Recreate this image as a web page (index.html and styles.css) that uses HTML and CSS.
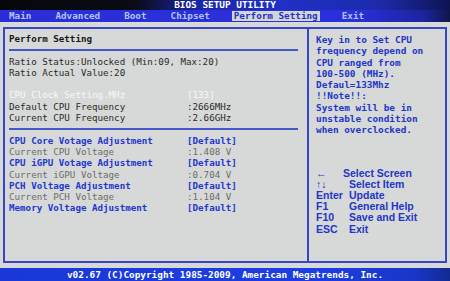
FILE: index.html
```html
<!DOCTYPE html>
<html>
<head>
<meta charset="utf-8">
<link rel="stylesheet" href="styles.css">
</head>
<body>
<div class="screen">
  <div class="title">BIOS SETUP UTILITY</div>
  <nav class="menu">
    <span class="tab">Main</span>
    <span class="tab">Advanced</span>
    <span class="tab">Boot</span>
    <span class="tab">Chipset</span>
    <span class="tab active">Perform Setting</span>
    <span class="tab">Exit</span>
  </nav>
  <div class="body">
    <div class="frame">
      <section class="left">
        <div class="row head">Perform Setting</div>
        <div class="rule"></div>
        <div class="row">Ratio Status:Unlocked (Min:09, Max:20)</div>
        <div class="row">Ratio Actual Value:20</div>
        <div class="row"></div>
        <div class="row sel"><span class="lbl">CPU Clock Setting.MHz</span><span>[133]</span></div>
        <div class="row"><span class="lbl">Default CPU Frequency</span><span>:2666MHz</span></div>
        <div class="row"><span class="lbl">Current CPU Frequency</span><span>:2.66GHz</span></div>
        <div class="rule"></div>
        <div class="row blue"><span class="lbl">CPU Core Votage Adjustment</span><span>[Default]</span></div>
        <div class="row gray"><span class="lbl">Current CPU Voltage</span><span>:1.408 V</span></div>
        <div class="row blue"><span class="lbl">CPU iGPU Votage Adjustment</span><span>[Default]</span></div>
        <div class="row gray"><span class="lbl">Current iGPU Voltage</span><span>:0.704 V</span></div>
        <div class="row blue"><span class="lbl">PCH Voltage Adjustment</span><span>[Default]</span></div>
        <div class="row gray"><span class="lbl">Current PCH Voltage</span><span>:1.104 V</span></div>
        <div class="row blue"><span class="lbl">Memory Voltage Adjustment</span><span>[Default]</span></div>
      </section>
      <aside class="right">
        <div class="help">
          <div>Key in to Set CPU</div>
          <div>frequency depend on</div>
          <div>CPU ranged from</div>
          <div>100-500 (MHz).</div>
          <div>Defaul=133Mhz</div>
          <div>!!Note!!:</div>
          <div>System will be in</div>
          <div>unstable condition</div>
          <div>when overclocked.</div>
        </div>
        <div class="keys">
          <span class="k">&#8592;</span><span class="d shift">Select Screen</span>
          <span class="k">&#8593;&#8595;</span><span class="d">Select Item</span>
          <span class="k">Enter</span><span class="d">Update</span>
          <span class="k">F1</span><span class="d">General Help</span>
          <span class="k">F10</span><span class="d">Save and Exit</span>
          <span class="k">ESC</span><span class="d">Exit</span>
        </div>
      </aside>
    </div>
  </div>
  <div class="footer">v02.67 (C)Copyright 1985-2009, American Megatrends, Inc.</div>
</div>
</body>
</html>
```

FILE: styles.css
```css
html, body {
  margin: 0;
  padding: 0;
  width: 450px;
  height: 281px;
  overflow: hidden;
  background: #d6d9d7;
}

.screen {
  width: 450px;
  height: 281px;
  display: flex;
  flex-direction: column;
  font-family: "DejaVu Sans Mono", "Liberation Mono", monospace;
}

.title {
  height: 10px;
  flex: none;
  line-height: 10px;
  text-align: center;
  color: #ffffff;
  font-size: 9.4px;
  font-weight: bold;
  background: linear-gradient(90deg, #07070b 0%, #0b0b16 30%, #1a26a8 44%, #2030c8 62%, #1c2aa8 85%, #0e1450 100%);
}

.menu {
  height: 12px;
  flex: none;
  display: flex;
  align-items: center;
  gap: 20px;
  padding-left: 7px;
  background: linear-gradient(90deg, #2a2ed6 0%, #2a30dc 78%, #1c24a0 94%, #10164a 100%);
}

.tab {
  padding: 0 2px;
  height: 10px;
  line-height: 10px;
  font-size: 9.3px;
  font-weight: bold;
  color: #b2c4f4;
}

.tab.active {
  background: #d2d6d5;
  color: #2232c8;
}

.body {
  flex: 1;
  min-height: 0;
  padding: 5px 3px 5px 3px;
  display: flex;
}

.frame {
  flex: 1;
  display: flex;
  border: 2px solid #3646c6;
}

.left {
  width: 298px;
  padding: 4px 0 0 4px;
  font-size: 9.2px;
  color: #2a2a2a;
}

.row {
  height: 11.3px;
  line-height: 11.3px;
  display: flex;
  white-space: pre;
}

.lbl {
  width: 178px;
  flex: none;
}

.head {
  font-weight: bold;
  color: #161616;
}

.sel {
  color: #f8f8f8;
}

.blue {
  color: #2236d0;
  font-weight: bold;
}

.gray {
  color: #6c6c6c;
}

.rule {
  height: 11.3px;
  display: flex;
  align-items: center;
  width: 289px;
}

.rule::before {
  content: "";
  display: block;
  width: 100%;
  height: 2px;
  background: #4656c8;
}

.right {
  flex: 1;
  border-left: 2px solid #3646c6;
  padding: 5px 0 0 7px;
  color: #2236c8;
}

.help {
  font-size: 9.4px;
  font-weight: bold;
  line-height: 11.3px;
}

.help div {
  height: 11.3px;
  white-space: nowrap;
}

.keys {
  margin-top: 32px;
  display: grid;
  grid-template-columns: 33px auto;
  grid-auto-rows: 11.2px;
  align-items: center;
  font-family: "Liberation Sans", Arial, sans-serif;
  font-size: 10.5px;
  font-weight: bold;
  line-height: 11.2px;
}

.shift {
  margin-left: -6px;
}

.footer {
  height: 13px;
  flex: none;
  line-height: 13px;
  text-align: center;
  color: #ffffff;
  font-size: 9.4px;
  font-weight: bold;
  background: linear-gradient(90deg, #1a38d8 0%, #1c3ee2 70%, #1a36c8 92%, #122a90 100%);
}
```
